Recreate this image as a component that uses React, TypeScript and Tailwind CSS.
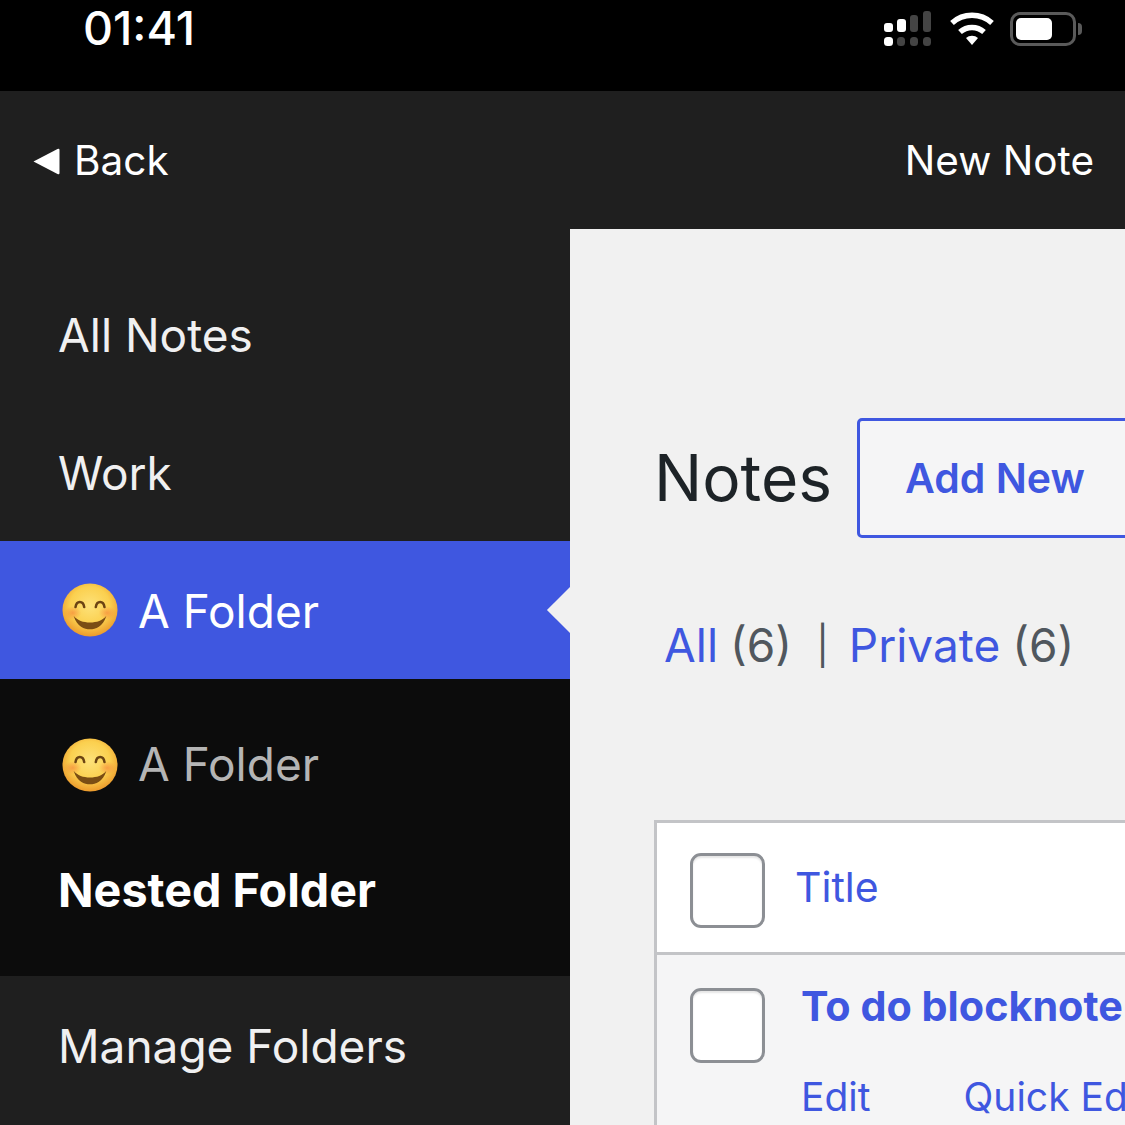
const sans = 'font-["Inter","Liberation_Sans",sans-serif]'

function Smiley() {
  return (
    <svg width="56" height="54" viewBox="0 0 58 56" preserveAspectRatio="none" className="shrink-0">
      <defs>
        <radialGradient id="face" cx="50%" cy="42%" r="58%">
          <stop offset="0%" stopColor="#fde27a" />
          <stop offset="62%" stopColor="#fbd04f" />
          <stop offset="100%" stopColor="#ec9a2c" />
        </radialGradient>
        <radialGradient id="blush" cx="50%" cy="50%" r="50%">
          <stop offset="0%" stopColor="#f5843c" stopOpacity="0.65" />
          <stop offset="100%" stopColor="#f5843c" stopOpacity="0" />
        </radialGradient>
      </defs>
      <ellipse cx="29" cy="28" rx="28.5" ry="27.5" fill="url(#face)" />
      <ellipse cx="11" cy="31" rx="9" ry="7" fill="url(#blush)" />
      <ellipse cx="47" cy="31" rx="9" ry="7" fill="url(#blush)" />
      <path d="M14 25c1-7 8-7 9 0M35 25c1-7 8-7 9 0" fill="none" stroke="#6b4413" strokeWidth="2.6" strokeLinecap="round" />
      <path d="M12 34c4 5 10 7 17 7s13-2 17-7c-4 12-11 14-17 14s-13-2-17-14z" fill="#7a4d14" />
    </svg>
  )
}

function StatusIcons() {
  return (
    <div className="flex items-center">
      <svg width="48" height="36" viewBox="0 0 48 36" className="mr-[17px]">
        <rect x="0" y="12" width="9" height="9" rx="3" fill="#fff" />
        <rect x="13" y="8" width="9" height="13" rx="3" fill="#fff" />
        <rect x="26" y="4" width="8" height="17" rx="3" fill="#444" />
        <rect x="39" y="0" width="8" height="21" rx="3" fill="#444" />
        <rect x="0" y="26" width="9" height="9" rx="3.5" fill="#fff" />
        <rect x="13" y="26" width="8" height="9" rx="3.5" fill="#444" />
        <rect x="26" y="26" width="8" height="9" rx="3.5" fill="#444" />
        <rect x="39" y="26" width="8" height="9" rx="3.5" fill="#444" />
      </svg>
      <svg width="46" height="34" viewBox="0 0 46 34" className="mr-[15px]">
        <path d="M23 33l-6-7a9 9 0 0 1 12 0z" fill="#fff" />
        <path d="M11 20a18 18 0 0 1 24 0" fill="none" stroke="#fff" strokeWidth="5.5" />
        <path d="M3 11a30 30 0 0 1 40 0" fill="none" stroke="#fff" strokeWidth="5.5" />
      </svg>
      <div className="flex items-center">
        <div className="flex h-[34px] w-[66px] items-center rounded-[10px] border-[3px] border-[#5a5a5a] p-[3px]">
          <div className="h-[22px] w-[36px] rounded-[5px] bg-white" />
        </div>
        <div className="ml-[2px] h-[12px] w-[4px] rounded-r-full bg-[#5a5a5a]" />
      </div>
    </div>
  )
}

function SideRow({ label }: { label: string }) {
  return <div className="flex h-[138px] items-center pl-[58px] pt-[2px] text-[46px] text-[#f0f0f1]">{label}</div>
}

function Checkbox({ className = '' }: { className?: string }) {
  return <div className={`h-[75px] w-[75px] shrink-0 rounded-[11px] border-[3px] border-[#8c8f94] bg-white shadow-[inset_0_2px_2px_rgba(0,0,0,0.1)] ${className}`} />
}

export default function App() {
  return (
    <div className={`flex h-[1125px] w-[1125px] flex-col overflow-hidden bg-black ${sans}`}>
      {/* Status bar */}
      <div className="flex h-[91px] shrink-0 items-start justify-between pl-[83px] pr-[43px]">
        <span className="text-[46.5px] leading-[56px] font-medium text-white">01:41</span>
        <div className="mt-[11px]">
          <StatusIcons />
        </div>
      </div>

      {/* Nav bar */}
      <div className="flex h-[138px] shrink-0 items-center justify-between bg-[#1f1f1f] pl-[33px] pr-[31px] pt-[2px] text-[40.5px] text-white">
        <div className="flex items-center">
          <svg width="27" height="27" viewBox="0 0 27 27" className="mr-[14px]">
            <path d="M0.5 13.5L24.5 1q2-1 2 1v23q0 2-2 1z" fill="#fff" />
          </svg>
          <span>Back</span>
        </div>
        <span>New Note</span>
      </div>

      <div className="flex min-h-0 flex-1">
        {/* Sidebar */}
        <div className="w-[570px] shrink-0 bg-[#1f1f1f] pt-[36px]">
          <SideRow label="All Notes" />
          <SideRow label="Work" />
          <div className="relative flex h-[138px] items-center gap-[20px] bg-[#3f57e0] pl-[62px] text-[46px] text-white">
            <Smiley />
            <span className="pt-[2px]">A Folder</span>
            <div className="absolute right-[-18px] top-1/2 h-[34px] w-[34px] -translate-y-1/2 rotate-45 bg-[#f1f1f1]" />
          </div>
          <div className="relative h-[297px] bg-[#0c0c0c] pt-[58px]">
            <div className="flex h-[56px] items-center gap-[20px] pl-[62px] text-[46px] text-[#b5b5b5]">
              <Smiley />
              <span className="mt-[-2px]">A Folder</span>
            </div>
            <div className="mt-[69px] flex h-[56px] items-center pl-[58px] text-[46.7px] font-bold text-white">Nested Folder</div>
          </div>
          <div className="flex h-[140px] items-center pl-[58px] text-[46px] text-[#f0f0f1]">Manage Folders</div>
        </div>

        {/* Content */}
        <div className="relative z-10 min-w-0 flex-1 overflow-hidden bg-[#f1f1f1] pl-[84px] whitespace-nowrap">
          <div className="mt-[189px] flex h-[120px] items-center">
            <h1 className="w-[203px] shrink-0 text-[64px] font-normal text-[#1d2327]">Notes</h1>
            <div className="flex h-[120px] w-[300px] shrink-0 items-center rounded-[5px] border-[3px] border-[#3f57e0] bg-[#f5f5f6] pl-[45px] pt-[2px] text-[41px] font-semibold text-[#3f57e0]">
              Add New
            </div>
          </div>

          <div className="mt-[77px] ml-[10px] flex h-[60px] items-center text-[46px] text-[#50575e]">
            <span className="text-[#3f57e0]">All</span>
            <span className="ml-[12px]">(6)</span>
            <span className="ml-[24px] mr-[20px] text-[38px]">|</span>
            <span className="text-[#3f57e0]">Private</span>
            <span className="ml-[12px]">(6)</span>
          </div>

          <div className="mt-[145px] w-[600px] border-[3px] border-[#c3c4c7] bg-white">
            <div className="flex h-[132px] items-center border-b-[3px] border-[#c3c4c7] pl-[33px]">
              <Checkbox className="mt-[6px]" />
              <span className="ml-[30px] text-[41px] text-[#3f57e0]">Title</span>
            </div>
            <div className="flex h-[300px] items-start bg-[#f5f5f6] pl-[33px] pt-[33px]">
              <Checkbox />
              <div className="ml-[36px]">
                <div className="mt-[-7px] text-[41.3px] leading-[50px] font-bold text-[#3f57e0]">To do blocknote</div>
                <div className="mt-[41px] flex text-[39px] leading-[50px] text-[#3f57e0]">
                  <span>Edit</span>
                  <span className="ml-[93px]">Quick Edit</span>
                </div>
              </div>
            </div>
          </div>
        </div>
      </div>
    </div>
  )
}
